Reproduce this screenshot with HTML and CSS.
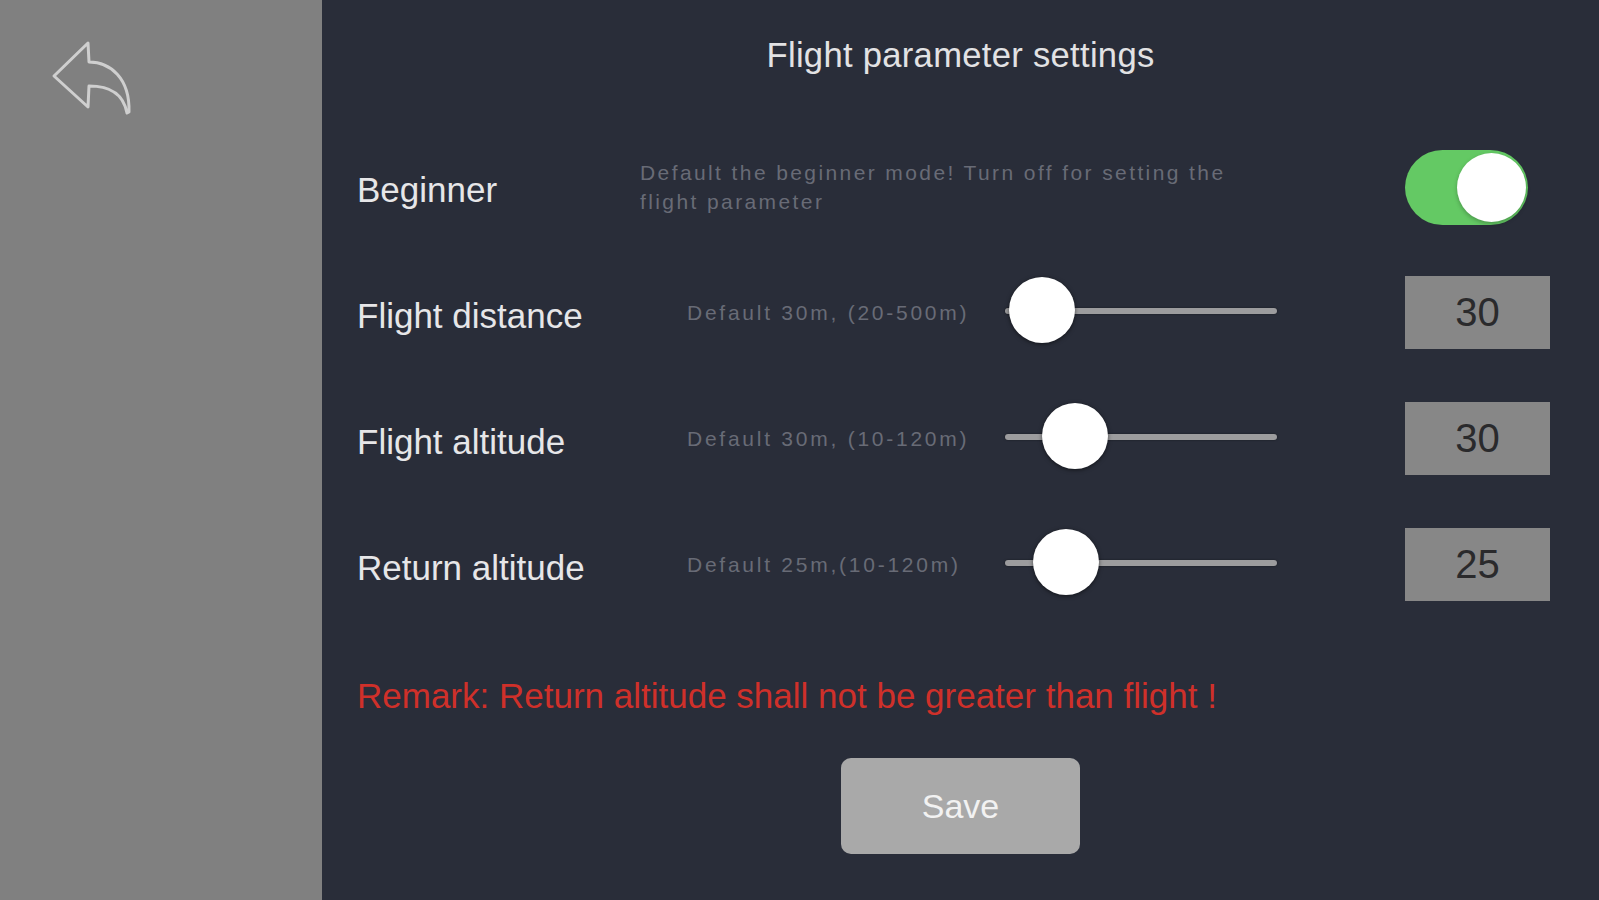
FILE: index.html
```html
<!DOCTYPE html>
<html lang="en">
<head>
<meta charset="utf-8">
<title>Flight parameter settings</title>
<link rel="stylesheet" href="styles.css">
</head>
<body>
<div class="app">
  <aside class="sidebar">
    <button class="back" aria-label="Back">
      <svg width="82" height="76" viewBox="0 0 82 76" fill="none" stroke="#cfcfcf" stroke-width="3" stroke-linejoin="round" stroke-linecap="round">
        <path d="M4 36 L38 3 L39 22 C60 22 80 38 79 72 L77 73 C73 52 58 46 39 46 L38 67 Z"/>
      </svg>
    </button>
  </aside>
  <main class="main">
    <header class="header">
      <h1 class="title">Flight parameter settings</h1>
    </header>
    <section class="rows">
      <div class="row">
        <div class="label">Beginner</div>
        <div class="desc desc-wide">Default the beginner mode! Turn off for setting the flight parameter</div>
        <div class="end">
          <div class="toggle on"><span class="toggle-knob"></span></div>
        </div>
      </div>
      <div class="row">
        <div class="label">Flight distance</div>
        <div class="desc">Default 30m, (20-500m)</div>
        <div class="slider"><span class="track"></span><span class="knob" style="left:4px"></span></div>
        <div class="end"><div class="value">30</div></div>
      </div>
      <div class="row">
        <div class="label">Flight altitude</div>
        <div class="desc">Default 30m, (10-120m)</div>
        <div class="slider"><span class="track"></span><span class="knob" style="left:37px"></span></div>
        <div class="end"><div class="value">30</div></div>
      </div>
      <div class="row">
        <div class="label">Return altitude</div>
        <div class="desc">Default 25m,(10-120m)</div>
        <div class="slider"><span class="track"></span><span class="knob" style="left:28px"></span></div>
        <div class="end"><div class="value">25</div></div>
      </div>
    </section>
    <p class="remark">Remark: Return altitude shall not be greater than flight !</p>
    <div class="actions">
      <button class="save">Save</button>
    </div>
  </main>
</div>
</body>
</html>
```

FILE: styles.css
```css
* { box-sizing: border-box; }
html, body {
  margin: 0;
  padding: 0;
  width: 1599px;
  height: 900px;
  overflow: hidden;
  background: #292d39;
  font-family: "Liberation Sans", Arial, sans-serif;
}
.app {
  display: flex;
  height: 900px;
}
.sidebar {
  width: 322px;
  flex: none;
  background: #808080;
  padding: 40px 0 0 50px;
}
.back {
  display: block;
  padding: 0;
  margin: 0;
  border: 0;
  background: none;
  cursor: pointer;
}
.back svg { display: block; }
.main {
  flex: 1;
  padding-left: 35px;
  display: flex;
  flex-direction: column;
}
.header {
  height: 110px;
  display: flex;
  align-items: center;
  justify-content: center;
  margin-left: -35px;
}
.title {
  margin: 0;
  font-size: 34.6px;
  font-weight: normal;
  color: #e2e2e4;
  letter-spacing: 0.3px;
}
.rows {
  margin-top: 17px;
}
.row {
  display: grid;
  grid-template-columns: 283px 365px 272px 128px 145px;
  align-items: center;
  height: 126px;
}
.label {
  font-size: 35px;
  color: #e6e6e8;
  white-space: nowrap;
}
.desc {
  font-size: 21px;
  letter-spacing: 2.75px;
  color: #686b76;
  padding-left: 47px;
  white-space: nowrap;
  margin-top: -7px;
}
.desc-wide {
  grid-column: 2 / 4;
  padding-left: 0;
  white-space: normal;
  width: 640px;
  line-height: 29px;
  letter-spacing: 2.4px;
  margin-top: -6px;
}
.end {
  grid-column: 5;
  display: flex;
  align-items: center;
}
.slider {
  position: relative;
  height: 70px;
  display: flex;
  align-items: center;
  margin-top: -10px;
}
.track {
  display: block;
  width: 100%;
  height: 6px;
  border-radius: 3px;
  background: #9c9c9e;
  box-shadow: 0 0 2px rgba(0,0,0,0.5);
}
.knob {
  position: absolute;
  top: 1px;
  width: 66px;
  height: 66px;
  border-radius: 50%;
  background: #ffffff;
  box-shadow: 0 1px 4px rgba(0,0,0,0.55);
}
.toggle {
  position: relative;
  width: 123px;
  height: 75px;
  border-radius: 38px;
  background: #64c964;
  margin-top: -6px;
}
.toggle-knob {
  position: absolute;
  right: 2px;
  top: 3px;
  width: 69px;
  height: 69px;
  border-radius: 50%;
  background: #ffffff;
  box-shadow: 0 2px 4px rgba(0,0,0,0.25);
}
.value {
  width: 145px;
  height: 73px;
  background: #878787;
  color: #2a2a2c;
  font-size: 40px;
  display: flex;
  align-items: center;
  justify-content: center;
  margin-top: -8px;
}
.remark {
  margin: 45px 0 0 0;
  font-size: 35px;
  line-height: 40px;
  color: #cf302a;
  white-space: nowrap;
}
.actions {
  display: flex;
  justify-content: center;
  margin-left: -35px;
  margin-top: 42px;
}
.save {
  width: 239px;
  height: 96px;
  border: 0;
  border-radius: 10px;
  background: #a9a9a9;
  color: #f2f2f2;
  font-family: "Liberation Sans", Arial, sans-serif;
  font-size: 34px;
  padding: 0;
}
```
